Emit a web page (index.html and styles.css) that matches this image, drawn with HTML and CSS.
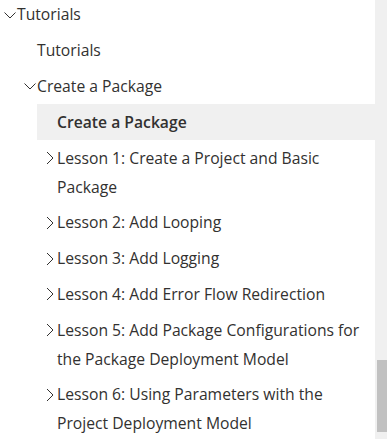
FILE: index.html
```html
<!DOCTYPE html>
<html>
<head>
<meta charset="utf-8">
<link rel="stylesheet" href="styles.css">
</head>
<body>
<div class="pane">
  <ul class="tree">
    <li class="row l0"><span class="chev down"><svg viewBox="0 0 14 14"><path d="M1.5 4.5 L7 10 L12.5 4.5"/></svg></span><span class="label">Tutorials</span></li>
    <li class="row l1"><span class="chev none"></span><span class="label">Tutorials</span></li>
    <li class="row l1"><span class="chev down"><svg viewBox="0 0 14 14"><path d="M1.5 4.5 L7 10 L12.5 4.5"/></svg></span><span class="label">Create a Package</span></li>
    <li class="row l2 selected"><span class="chev none"></span><span class="label">Create a Package</span></li>
    <li class="row l2"><span class="chev right"><svg viewBox="0 0 14 14"><path d="M4 1 L10 7 L4 13"/></svg></span><span class="label">Lesson 1: Create a Project and Basic Package</span></li>
    <li class="row l2"><span class="chev right"><svg viewBox="0 0 14 14"><path d="M4 1 L10 7 L4 13"/></svg></span><span class="label">Lesson 2: Add Looping</span></li>
    <li class="row l2"><span class="chev right"><svg viewBox="0 0 14 14"><path d="M4 1 L10 7 L4 13"/></svg></span><span class="label">Lesson 3: Add Logging</span></li>
    <li class="row l2"><span class="chev right"><svg viewBox="0 0 14 14"><path d="M4 1 L10 7 L4 13"/></svg></span><span class="label">Lesson 4: Add Error Flow Redirection</span></li>
    <li class="row l2"><span class="chev right"><svg viewBox="0 0 14 14"><path d="M4 1 L10 7 L4 13"/></svg></span><span class="label">Lesson 5: Add Package Configurations for the Package Deployment Model</span></li>
    <li class="row l2"><span class="chev right"><svg viewBox="0 0 14 14"><path d="M4 1 L10 7 L4 13"/></svg></span><span class="label">Lesson 6: Using Parameters with the Project Deployment Model</span></li>
  </ul>
  <div class="scrollbar"><div class="thumb"></div></div>
</div>
</body>
</html>
```
FILE: styles.css
```css
html, body {
  margin: 0;
  padding: 0;
  background: #ffffff;
}
body {
  font-family: "Open Sans", "Noto Sans", sans-serif;
  font-size: 15.7px;
  color: #323130;
  overflow: hidden;
}
.pane {
  display: flex;
  width: 387px;
  height: 439px;
  overflow: hidden;
}
.tree {
  list-style: none;
  margin: -3px 0 0 0;
  padding: 0;
  flex: 1;
  min-width: 0;
}
.row {
  display: flex;
  align-items: flex-start;
  padding: 3.4px 0;
  line-height: 29px;
}
.l0 { padding-left: 3px; }
.l1 { padding-left: 23px; }
.l2 { padding-left: 43px; }
.selected {
  background: #f0f0f0;
  margin-left: 37px;
  padding-left: 6px;
  font-weight: 600;
}
.chev {
  flex: 0 0 14px;
  width: 14px;
  height: 29px;
  display: flex;
  align-items: center;
}
.chev svg {
  width: 14px;
  height: 14px;
  fill: none;
  stroke: #323130;
  stroke-width: 1;
}
.label {
  flex: 1;
  padding-right: 8px;
}
.scrollbar {
  flex: 0 0 10px;
  background: #f0f0f0;
  display: flex;
  flex-direction: column;
  justify-content: flex-end;
  padding: 0 0 7px 2px;
}
.thumb {
  height: 72px;
  background: #c1c1c1;
}
```
